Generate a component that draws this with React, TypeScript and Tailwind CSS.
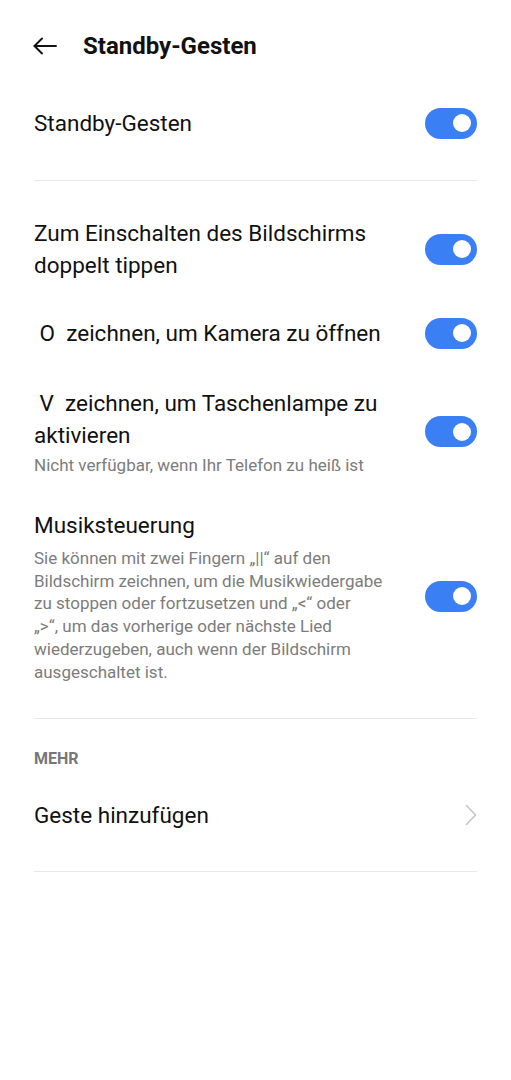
import React from "react";

function Toggle() {
  return (
    <div className="flex h-[31px] w-[52px] shrink-0 items-center justify-end rounded-full bg-[#3b7ff5] pr-[6px]">
      <div className="h-[18px] w-[18px] rounded-full bg-white" />
    </div>
  );
}

function Divider({ className = "" }: { className?: string }) {
  return <div className={`h-px bg-[#e8e8e8] ${className}`} />;
}

export default function App() {
  return (
    <div
      className="min-h-[1080px] w-[511px] bg-white px-[34px] text-[#111]"
      style={{ fontFamily: "Roboto, 'Noto Sans', sans-serif" }}
    >
      {/* header */}
      <div className="flex h-[92px] items-center">
        <svg width="24" height="24" viewBox="0 0 24 24" className="-ml-[1px]" fill="none" stroke="#111" strokeWidth="1.9" strokeLinecap="round" strokeLinejoin="round">
          <path d="M23 12H1.5" />
          <path d="M9 4.5L1.5 12L9 19.5" />
        </svg>
        <h1 className="ml-[26px] text-[24px] font-bold leading-[30px]">Standby-Gesten</h1>
      </div>

      <div className="flex h-[62px] items-center justify-between">
        <span className="text-[22.5px] leading-[32px]">Standby-Gesten</span>
        <Toggle />
      </div>
      <Divider className="mt-[26px]" />

      <div className="mt-[36px] flex items-center justify-between">
        <div className="text-[22.5px] leading-[32px]">
          Zum Einschalten des Bildschirms
          <br />
          doppelt tippen
        </div>
        <Toggle />
      </div>

      <div className="mt-[36px] flex items-center justify-between">
        <div className="text-[22.5px] leading-[32px]">&nbsp;O&nbsp; zeichnen, um Kamera zu öffnen</div>
        <Toggle />
      </div>

      <div className="mt-[38px] flex items-center justify-between">
        <div>
          <div className="text-[22.5px] leading-[32px]">
            &nbsp;V&nbsp; zeichnen, um Taschenlampe zu
            <br />
            aktivieren
          </div>
          <div className="mt-[3px] text-[17px] leading-[22px] text-[#7c7c7c]">
            Nicht verfügbar, wenn Ihr Telefon zu heiß ist
          </div>
        </div>
        <Toggle />
      </div>

      <div className="mt-[33px] flex items-center justify-between">
        <div>
          <div className="text-[22.5px] leading-[32px]">Musiksteuerung</div>
          <div className="mt-[6px] text-[17px] leading-[22.7px] text-[#7c7c7c]">
            Sie können mit zwei Fingern „||“ auf den
            <br />
            Bildschirm zeichnen, um die Musikwiedergabe
            <br />
            zu stoppen oder fortzusetzen und „&lt;“ oder
            <br />
            „&gt;“, um das vorherige oder nächste Lied
            <br />
            wiederzugeben, auch wenn der Bildschirm
            <br />
            ausgeschaltet ist.
          </div>
        </div>
        <Toggle />
      </div>

      <Divider className="mt-[35px]" />

      <div className="mt-[30px] text-[16px] font-bold leading-[20px] text-[#777]">MEHR</div>

      <div className="mt-[30px] flex items-center justify-between">
        <span className="text-[22.5px] leading-[32px]">Geste hinzufügen</span>
        <svg width="12" height="22" viewBox="0 0 12 22" fill="none" stroke="#c6c6c6" strokeWidth="1.6" strokeLinecap="round" strokeLinejoin="round">
          <path d="M1.5 1.5L10.5 11L1.5 20.5" />
        </svg>
      </div>

      <Divider className="mt-[40px]" />
    </div>
  );
}
